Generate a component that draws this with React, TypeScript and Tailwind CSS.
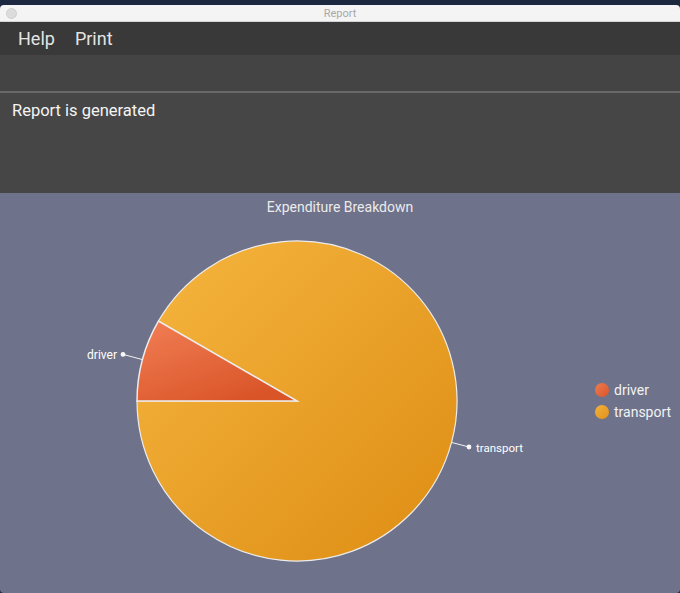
const font = { fontFamily: 'Roboto, "Noto Sans", sans-serif' };

const CX = 297;
const CY = 184;
const R = 160;

function Pie() {
  // 150° point on the circle (driver/transport boundary)
  const bx = CX + R * Math.cos((150 * Math.PI) / 180);
  const by = CY - R * Math.sin((150 * Math.PI) / 180);

  return (
    <svg width="580" height="368" viewBox="0 0 580 368" className="shrink-0">
      <defs>
        <linearGradient id="gTransport" x1="0" y1="0" x2="1" y2="1">
          <stop offset="0%" stopColor="#f6b640" />
          <stop offset="100%" stopColor="#dd8c12" />
        </linearGradient>
        <linearGradient id="gDriver" x1="0" y1="0" x2="0.7" y2="1">
          <stop offset="0%" stopColor="#f27e55" />
          <stop offset="100%" stopColor="#d95427" />
        </linearGradient>
      </defs>

      <path
        d={`M${CX},${CY} L${bx},${by} A${R},${R} 0 1,1 ${CX - R},${CY} Z`}
        fill="url(#gTransport)"
        stroke="#ececec"
        strokeWidth="1.2"
      />
      <path
        d={`M${CX},${CY} L${CX - R},${CY} A${R},${R} 0 0,1 ${bx},${by} Z`}
        fill="url(#gDriver)"
        stroke="#ececec"
        strokeWidth="1.5"
      />

      {/* driver label */}
      <line x1="142.5" y1="142.6" x2="123" y2="137.4" stroke="#f2f2f2" strokeWidth="1" />
      <circle cx="123" cy="137.4" r="2.4" fill="#f8f8f8" />
      <text x="117" y="141.5" textAnchor="end" fontSize="12" fill="#ffffff" style={font}>
        driver
      </text>

      {/* transport label */}
      <line x1="451.5" y1="225.4" x2="469" y2="230" stroke="#f2f2f2" strokeWidth="1" />
      <circle cx="469" cy="230" r="2.4" fill="#f8f8f8" />
      <text x="476" y="234.5" fontSize="11.5" fill="#ffffff" style={font}>
        transport
      </text>
    </svg>
  );
}

export default function App() {
  return (
    <div className="flex h-[593px] w-[680px] flex-col overflow-hidden bg-[#1e2a42]" style={font}>
      <div className="h-[5px] shrink-0 bg-[#1c2840]" />

      {/* title bar */}
      <div className="relative flex h-[17px] shrink-0 items-center justify-center rounded-t-[4px] border-b border-[#d4d4d4] bg-[#f4f4f4]">
        <span className="absolute left-[6px] top-[3px] h-[11px] w-[11px] rounded-full border border-[#cfcfcf] bg-[#dcdcdc]" />
        <span className="text-[11px] leading-none text-[#a9a9a9]">Report</span>
      </div>

      {/* menu bar */}
      <div className="flex h-[33px] shrink-0 items-center gap-[20px] bg-[#393939] px-[18px] text-[18px] text-[#e4e4e4]">
        <span>Help</span>
        <span>Print</span>
      </div>

      <div className="h-[38px] shrink-0 border-b-2 border-[#686868] bg-[#444444]" />

      <div className="h-[100px] shrink-0 bg-[#464646] px-[12px] pt-[6px] text-[16.5px] text-[#f4f4f4]">
        Report is generated
      </div>

      {/* chart */}
      <div className="flex flex-1 flex-col rounded-b-[4px] bg-[#6e728a]">
        <div className="pt-[4px] text-center text-[14px] leading-[20px] text-[#ebebeb]">
          Expenditure Breakdown
        </div>
        <div className="flex items-center">
          <Pie />
          <div className="ml-[15px] flex flex-col gap-[6px] text-[14px] leading-[16px] text-[#f2f2f2]">
            <div className="flex items-center gap-[5px]">
              <span className="h-[14px] w-[14px] rounded-full bg-gradient-to-br from-[#ef7a50] to-[#d9562a]" />
              <span>driver</span>
            </div>
            <div className="flex items-center gap-[5px]">
              <span className="h-[14px] w-[14px] rounded-full bg-gradient-to-br from-[#f4b13d] to-[#e0921a]" />
              <span>transport</span>
            </div>
          </div>
        </div>
      </div>
    </div>
  );
}
